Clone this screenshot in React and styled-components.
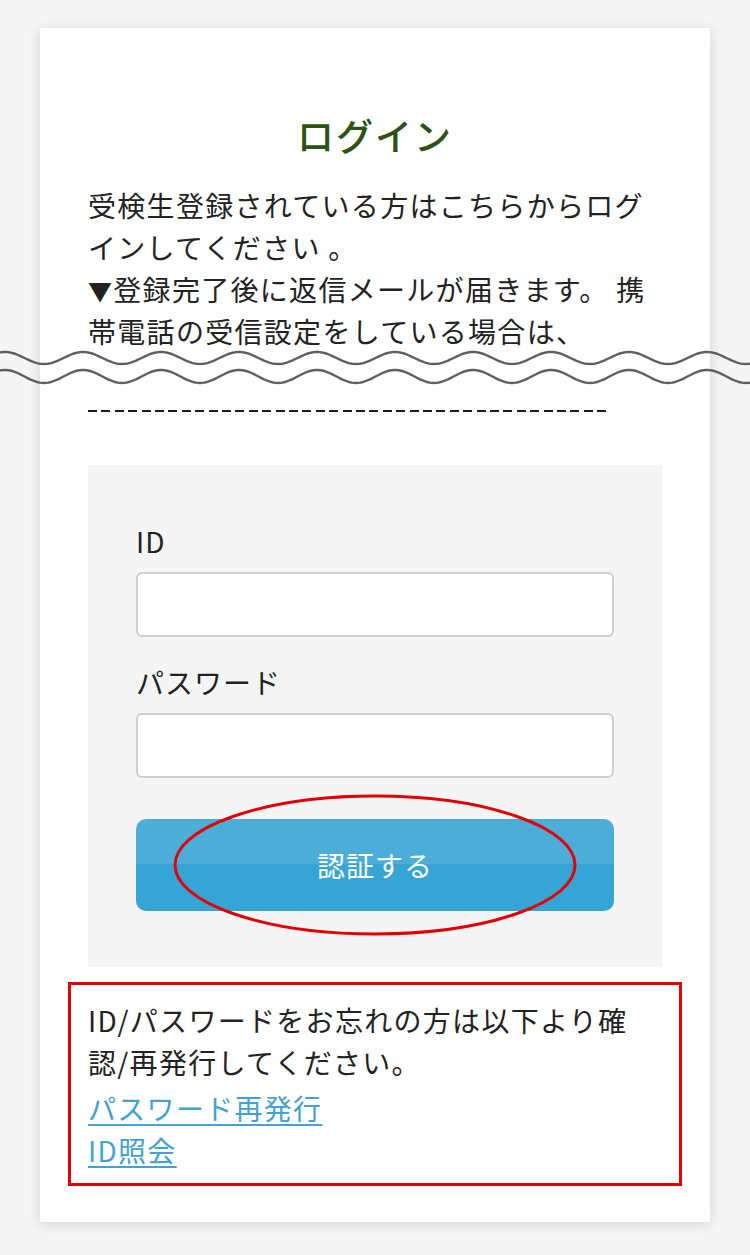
import React from 'react';
import styled, { createGlobalStyle } from 'styled-components';

const GlobalStyle = createGlobalStyle`
    body {
        margin: 0;
        background: #f5f5f5;
        font-family: "Noto Sans CJK JP", "Noto Sans", sans-serif;
        color: #222;
    }
`;

const Page = styled.div`
    padding: 28px 40px 33px;
`;

const Card = styled.div`
    background: #fff;
    padding: 80px 48px 36px;
    box-shadow: 0 2px 12px rgba(0, 0, 0, 0.14);
`;

const Title = styled.h1`
    margin: 0 0 22px;
    text-align: center;
    font-size: 37px;
    line-height: 54px;
    font-weight: 500;
    letter-spacing: 2px;
    color: #2c5216;
`;

const Text = styled.p`
    margin: 0;
    font-size: 28px;
    line-height: 42px;
    letter-spacing: 1.3px;
`;

const Wave = styled.svg`
    display: block;
    width: 750px;
    height: 40px;
    margin: -4px 0 0 -88px;
`;

const Dashes = styled.div`
    width: 522px;
    height: 2px;
    margin-top: 22px;
    background: repeating-linear-gradient(to right, #1a1a1a 0 9px, transparent 9px 13.4px);
`;

const Panel = styled.div`
    margin-top: 53px;
    background: #f5f5f5;
    padding: 55px 48px 56px;
`;

const Label = styled.label`
    display: block;
    font-size: 28px;
    line-height: 42px;
    letter-spacing: 1px;
    margin: ${p => (p.$first ? '0' : '24px')} 0 10px;
`;

const Input = styled.input`
    display: block;
    box-sizing: border-box;
    width: 100%;
    height: 65px;
    border: 2px solid #cfcfcf;
    border-radius: 6px;
    background: #fff;
    font-size: 28px;
`;

const ButtonWrap = styled.div`
    position: relative;
    margin-top: 41px;
`;

const Button = styled.button`
    display: block;
    width: 100%;
    height: 92px;
    border: 0;
    border-radius: 10px;
    background: linear-gradient(to bottom, #4cadd9 0 49%, #36a4d4 49% 100%);
    color: #fff;
    font-family: inherit;
    font-size: 28px;
    letter-spacing: 1px;
`;

const Ellipse = styled.svg`
    position: absolute;
    left: 37px;
    top: -25px;
    width: 404px;
    height: 142px;
    pointer-events: none;
`;

const ForgotBox = styled.div`
    margin: 15px -20px 0;
    border: 3px solid #e00000;
    padding: 14px 17px 12px;
`;

const Links = styled.div`
    margin-top: 4px;
`;

const Link = styled.a`
    display: block;
    width: fit-content;
    font-size: 28px;
    line-height: 42px;
    letter-spacing: 1.3px;
    color: #45a2cf;
    text-decoration: underline;
    text-underline-offset: 4px;
`;

const Triangle = styled.span`
    font-size: 24px;
    line-height: 1;
`;

const wavePath = (center, amp) => {
    const pts = [];
    for (let x = 0; x <= 750; x += 2) {
        const y = center - amp * Math.cos((2 * Math.PI * (x - 5)) / 78);
        pts.push(`${x},${y.toFixed(2)}`);
    }
    return 'M' + pts.join(' L');
};

const App = () => {
    return (
        <Page>
            <GlobalStyle />
            <Card>
                <Title>ログイン</Title>
                <Text>
                    受検生登録されている方はこちらからログ<br />
                    インしてください 。<br />
                    <Triangle>▼</Triangle>登録完了後に返信メールが届きます。 携<br />
                    帯電話の受信設定をしている場合は、
                </Text>
                <Wave viewBox="0 0 750 40">
                    <path d={wavePath(10, 6)} fill="none" stroke="#5f5f5f" strokeWidth="2.4" />
                    <path d={wavePath(28.5, 6.5)} fill="none" stroke="#5f5f5f" strokeWidth="2.4" />
                </Wave>
                <Dashes />
                <Panel>
                    <Label $first>ID</Label>
                    <Input type="text" />
                    <Label>パスワード</Label>
                    <Input type="password" />
                    <ButtonWrap>
                        <Button>認証する</Button>
                        <Ellipse viewBox="0 0 404 142">
                            <ellipse cx="202" cy="71" rx="200" ry="69" fill="none" stroke="#e00000" strokeWidth="3" />
                        </Ellipse>
                    </ButtonWrap>
                </Panel>
                <ForgotBox>
                    <Text>
                        ID/パスワードをお忘れの方は以下より確<br />
                        認/再発行してください。
                    </Text>
                    <Links>
                        <Link href="#">パスワード再発行</Link>
                        <Link href="#">ID照会</Link>
                    </Links>
                </ForgotBox>
            </Card>
        </Page>
    );
};

export default App;
